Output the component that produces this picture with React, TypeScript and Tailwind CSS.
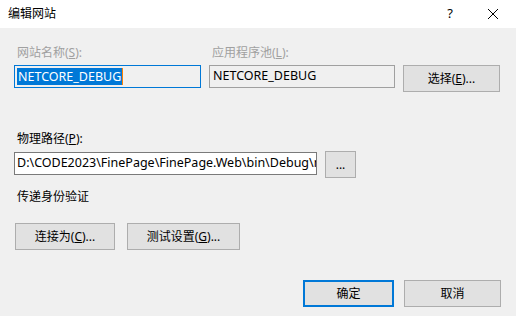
import React from "react";

const font = { fontFamily: '"Noto Sans", "Noto Sans CJK SC", sans-serif' };

function Btn({ children, className = "", primary = false }: { children: React.ReactNode; className?: string; primary?: boolean }) {
  return (
    <div
      className={
        "flex items-center justify-center h-[27px] bg-[#e1e1e1] text-[12px] text-black " +
        (primary ? "border-2 border-[#0078d7] " : "border border-[#adadad] ") +
        className
      }
    >
      {children}
    </div>
  );
}

export default function App() {
  return (
    <div className="w-[516px] h-[316px] flex flex-col bg-[#f0f0f0] text-[12px] text-black" style={font}>
      <div className="h-[28px] bg-white flex items-center pl-[8px]">
        <span className="text-[12px]">编辑网站</span>
        <div className="flex-1" />
        <span className="w-[20px] text-center text-[13px] mr-[27px]">?</span>
        <svg width="12" height="12" viewBox="0 0 12 12" className="mr-[17px]">
          <path d="M1 1 L11 11 M11 1 L1 11" stroke="#000" strokeWidth="1" />
        </svg>
      </div>
      <div className="flex flex-col pl-[14px] pr-[15px]">
        <div className="flex mt-[17px]">
          <div className="flex flex-col w-[187px]">
            <span className="text-[#a0a0a0] h-[16px] leading-[16px] pl-[3px]">网站名称(<u>S</u>):</span>
            <div className="mt-[4px] h-[23px] border border-[#0078d7] flex items-center pl-[2px] text-[12.5px]">
              <span className="bg-[#0078d7] text-white px-[1px] leading-[17px] border-r border-[#ff8000]">NETCORE_DEBUG</span>
            </div>
          </div>
          <div className="flex flex-col w-[186px] ml-[8px]">
            <span className="text-[#a0a0a0] h-[16px] leading-[16px] pl-[3px]">应用程序池(<u>L</u>):</span>
            <div className="mt-[4px] h-[23px] border border-[#a0a0a0] bg-[#f0f0f0] flex items-center pl-[3px] text-[12.5px]">
              NETCORE_DEBUG
            </div>
          </div>
          <Btn className="w-[97px] ml-[8px] mt-[20px]">选择(<u>E</u>)...</Btn>
        </div>
        <span className="mt-[39px] h-[16px] leading-[16px] pl-[3px]">物理路径(<u>P</u>):</span>
        <div className="flex items-start mt-[4px]">
          <div className="w-[303px] h-[23px] mt-[1px] border border-[#7a7a7a] bg-white flex items-center pl-[2px] overflow-hidden whitespace-nowrap text-[12.5px]">
            <span className="whitespace-nowrap">D:\CODE2023\FinePage\FinePage.Web\bin\Debug\n</span>
          </div>
          <Btn className="w-[31px] ml-[8px]">...</Btn>
        </div>
        <span className="mt-[11px] h-[16px] leading-[16px] pl-[3px]">传递身份验证</span>
        <div className="flex mt-[18px] ml-[1px]">
          <Btn className="w-[100px]">连接为(<u>C</u>)...</Btn>
          <Btn className="w-[113px] ml-[12px]">测试设置(<u>G</u>)...</Btn>
        </div>
        <div className="flex justify-end mt-[30px]">
          <Btn primary className="w-[91px]">确定</Btn>
          <Btn className="w-[97px] ml-[10px]">取消</Btn>
        </div>
      </div>
    </div>
  );
}
